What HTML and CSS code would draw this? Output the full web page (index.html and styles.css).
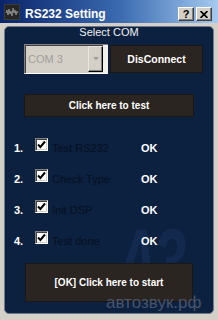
FILE: index.html
```html
<!DOCTYPE html>
<html>
<head>
<meta charset="utf-8">
<link rel="stylesheet" href="styles.css">
</head>
<body>
<div class="window">
  <div class="titlebar">
    <span class="app-icon">
      <svg width="16" height="16" viewBox="0 0 16 16">
        <rect x="0" y="0" width="16" height="16" fill="#3a3a3a"/>
        <rect x="1" y="1" width="14" height="14" fill="#262626"/>
        <path d="M2 9 L3 6 L4 11 L5 5 L6 10 L7 7 L8 12 L9 4 L10 9 L11 6 L12 11 L13 7 L14 9" stroke="#8a8a8a" stroke-width="1" fill="none"/>
      </svg>
    </span>
    <span class="title">RS232 Setting</span>
    <span class="tb-btns">
      <span class="tb-btn tb-help">?</span>
      <span class="tb-btn tb-close">
        <svg width="8" height="7" viewBox="0 0 8 7"><path d="M0.5 0 L7.5 7 M7.5 0 L0.5 7" stroke="#000" stroke-width="1.7"/></svg>
      </span>
    </span>
  </div>
  <div class="frame">
    <div class="panel">
      <div class="wm-logo">A3</div>
      <div class="group-label">Select COM</div>
      <div class="com-row">
        <div class="combo">
          <span class="combo-text">COM 3</span>
          <span class="combo-btn">
            <svg width="6" height="4" viewBox="0 0 6 4"><path d="M0 0 L6 0 L3 3.5 Z" fill="#a4a09a"/></svg>
          </span>
          <span class="combo-strip"></span>
        </div>
        <div class="btn btn-disconnect">DisConnect</div>
      </div>
      <div class="btn btn-test">Click here to test</div>
      <div class="steps">
        <div class="step">
          <span class="num">1.</span>
          <span class="chk"><svg width="9" height="9" viewBox="0 0 9 9"><path d="M1 4.5 L3.4 7 L8 1.5" stroke="#000" stroke-width="2" fill="none"/></svg></span>
          <span class="label">Test RS232</span>
          <span class="ok">OK</span>
        </div>
        <div class="step">
          <span class="num">2.</span>
          <span class="chk"><svg width="9" height="9" viewBox="0 0 9 9"><path d="M1 4.5 L3.4 7 L8 1.5" stroke="#000" stroke-width="2" fill="none"/></svg></span>
          <span class="label">Check Type</span>
          <span class="ok">OK</span>
        </div>
        <div class="step">
          <span class="num">3.</span>
          <span class="chk"><svg width="9" height="9" viewBox="0 0 9 9"><path d="M1 4.5 L3.4 7 L8 1.5" stroke="#000" stroke-width="2" fill="none"/></svg></span>
          <span class="label">Init DSP</span>
          <span class="ok">OK</span>
        </div>
        <div class="step">
          <span class="num">4.</span>
          <span class="chk"><svg width="9" height="9" viewBox="0 0 9 9"><path d="M1 4.5 L3.4 7 L8 1.5" stroke="#000" stroke-width="2" fill="none"/></svg></span>
          <span class="label">Test done</span>
          <span class="ok">OK</span>
        </div>
      </div>
      <div class="btn btn-start">[OK] Click here to start</div>
      <div class="wm-site">автозвук.рф</div>
    </div>
  </div>
</div>
</body>
</html>
```

FILE: styles.css
```css
html, body {
  margin: 0;
  padding: 0;
}
body {
  width: 218px;
  height: 320px;
  overflow: hidden;
  background: #d4d0c8;
  font-family: "Liberation Sans", Arial, sans-serif;
}
.window {
  width: 218px;
  height: 320px;
  display: flex;
  flex-direction: column;
  background: #d4d0c8;
}
.titlebar {
  height: 23px;
  flex: none;
  display: flex;
  align-items: center;
  background: linear-gradient(to right, #0a246a 0%, #3a6ab0 55%, #a6caf0 100%);
  padding: 0 0 0 4px;
  box-sizing: border-box;
}
.app-icon {
  width: 16px;
  height: 16px;
  display: flex;
  margin-top: 1px;
}
.title {
  color: #fff;
  font-weight: bold;
  font-size: 12px;
  margin-left: 5px;
  margin-top: 4px;
  flex: 1;
}
.tb-btns {
  display: flex;
  gap: 2px;
  margin-right: 6px;
  margin-top: 5px;
}
.tb-btn {
  width: 16px;
  height: 14px;
  box-sizing: border-box;
  background: #d4d0c8;
  border-top: 1px solid #fff;
  border-left: 1px solid #fff;
  border-right: 1px solid #404040;
  border-bottom: 1px solid #404040;
  box-shadow: inset -1px -1px 0 #808080;
  display: flex;
  align-items: center;
  justify-content: center;
  font-weight: bold;
  font-size: 11px;
  line-height: 12px;
  color: #000;
}
.tb-close svg {
  margin-left: -1px;
}
.frame {
  flex: 1;
  padding: 3px 4px 6px 4px;
  display: flex;
}
.panel {
  position: relative;
  flex: 1;
  background: #0c2040;
  border: 1px solid #6c7a8e;
  border-radius: 5px;
  display: flex;
  flex-direction: column;
  overflow: hidden;
}
.group-label {
  position: relative;
  color: #f0f0f0;
  font-size: 11px;
  line-height: 13px;
  text-align: center;
  margin-top: -1px;
}
.com-row {
  position: relative;
  display: flex;
  align-items: center;
  margin-top: 5px;
  padding-left: 19px;
}
.combo {
  width: 84px;
  height: 30px;
  box-sizing: border-box;
  background: #d4d0c8;
  border-top: 1px solid #808080;
  border-left: 1px solid #808080;
  border-bottom: 1px solid #fff;
  display: flex;
  align-items: center;
  box-shadow: inset 1px 1px 0 #404040;
}
.combo-text {
  flex: 1;
  color: #a29e97;
  font-size: 11px;
  padding-left: 3px;
}
.combo-btn {
  width: 15px;
  height: 26px;
  box-sizing: border-box;
  background: #d4d0c8;
  border-top: 1px solid #e8e6e0;
  border-left: 1px solid #e8e6e0;
  border-right: 1px solid #000;
  border-bottom: 1px solid #000;
  box-shadow: inset -1px -1px 0 #808080;
  display: flex;
  align-items: center;
  justify-content: center;
}
.combo-strip {
  width: 5px;
  align-self: stretch;
  background: #f2f1ec;
}
.btn {
  position: relative;
  background: #2b2521;
  color: #fff;
  font-weight: bold;
  font-size: 10px;
  display: flex;
  align-items: center;
  justify-content: center;
  box-sizing: border-box;
  border: 1px solid #1c1714;
}
.btn-disconnect {
  width: 93px;
  height: 28px;
  margin-left: 2px;
  font-size: 10.5px;
}
.btn-test {
  width: 170px;
  height: 23px;
  margin-top: 20px;
  margin-left: 19px;
}
.steps {
  position: relative;
  margin-top: 15px;
  display: flex;
  flex-direction: column;
}
.step {
  height: 31px;
  display: flex;
  align-items: center;
}
.num {
  width: 30px;
  padding-left: 9px;
  box-sizing: border-box;
  color: #fff;
  font-weight: bold;
  font-size: 11px;
}
.chk {
  width: 13px;
  height: 13px;
  box-sizing: border-box;
  background: #fff;
  border-top: 1px solid #808080;
  border-left: 1px solid #808080;
  border-right: 1px solid #fff;
  border-bottom: 1px solid #fff;
  box-shadow: inset 1px 1px 0 #404040, inset -1px -1px 0 #d4d0c8;
  display: flex;
  align-items: center;
  justify-content: center;
  margin-top: -6px;
}
.label {
  width: 93px;
  padding-left: 4px;
  box-sizing: border-box;
  color: #06101f;
  font-size: 11px;
}
.ok {
  color: #fff;
  font-weight: bold;
  font-size: 11px;
}
.btn-start {
  width: 168px;
  height: 39px;
  margin-top: 7px;
  margin-left: 20px;
}
.wm-logo {
  position: absolute;
  left: 110px;
  top: 188px;
  font-size: 96px;
  font-weight: bold;
  font-style: italic;
  line-height: 96px;
  color: #13294d;
  letter-spacing: -8px;
  transform: scaleX(0.62);
  transform-origin: left top;
  white-space: nowrap;
}
.wm-site {
  position: absolute;
  left: 101px;
  top: 266px;
  font-size: 17px;
  line-height: 20px;
  color: #46546a;
}
```
